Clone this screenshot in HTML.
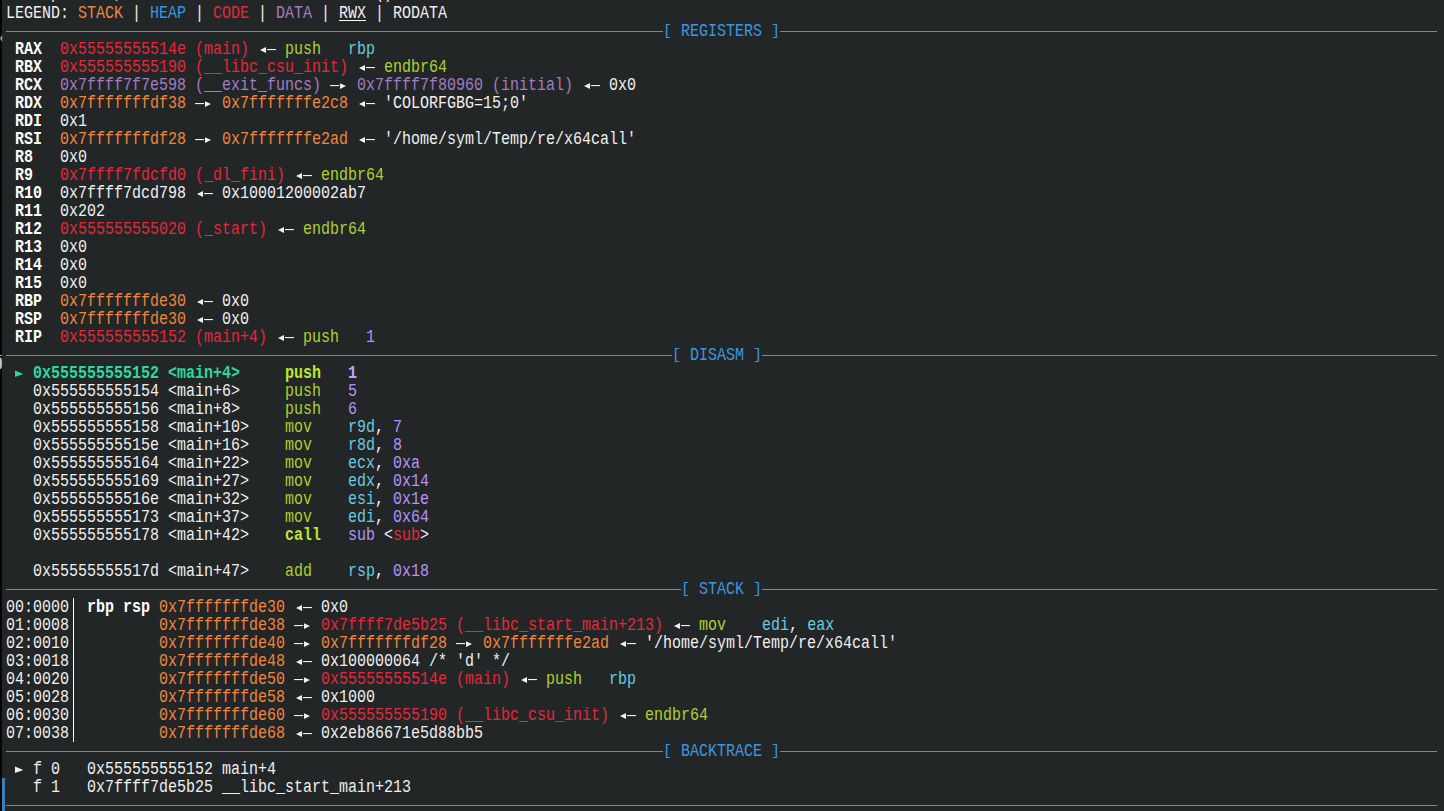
<!DOCTYPE html>
<html><head><meta charset="utf-8"><style>
html,body{margin:0;padding:0;background:#232627;}
body{width:1444px;height:811px;overflow:hidden;position:relative;font-family:"Liberation Mono",monospace;font-size:17.5px;}
.row{position:absolute;left:6px;height:18px;line-height:18px;white-space:pre;color:#f0f0f0;}
.row{transform-origin:0 0;transform:scaleX(0.85700);}
.ic{position:absolute;}
.vb{position:absolute;width:1.4px;height:18px;background:#fcfcfc;}
.ln{position:absolute;height:1px;background:#4a95d2;}
.bt{color:#3d97e0;}
.brk{display:inline-block;transform-origin:50% 5px;transform:scaleY(0.88);}
.w{color:#f0f0f0}
.u{color:#f0f0f0}
.b{color:#ffffff;font-weight:bold}
.o{color:#f0863a}
.bl{color:#3596e4}
.r{color:#e5283a}
.p{color:#a47cc4}
.g{color:#2ed7a0;font-weight:bold}
.mg{color:#aed12c}
.mgb{color:#bde52a;font-weight:bold}
.mb{color:#68cce0}
.mp{color:#b294fa}
.mpb{color:#bba4ff;font-weight:bold}
.edge{position:absolute;left:0;top:0;width:2px;height:811px;background:#050508;}
.edge2{position:absolute;left:2px;top:778px;width:3px;height:33px;background:#3a80b8;}
</style></head><body>
<div class="row" style="top:-16px"><span class="w">Breakpoint 1, 0x0000555555555152 in main ()</span></div>
<div class="row" style="top:4px"><span class="w">LEGEND: </span><span class="o">STACK</span><span class="w"> | </span><span class="bl">HEAP</span><span class="w"> | </span><span class="r">CODE</span><span class="w"> | </span><span class="p">DATA</span><span class="w"> | </span><span class="u">RWX</span><span class="w"> | </span><span class="w">RODATA</span></div>
<div class="row" style="top:40px"><span class="w"> </span><span class="b">RAX</span><span class="w">  </span><span class="r">0x55555555514e (main)</span><span class="w"> </span>  <span class="w"> </span><span class="mg">push</span><span class="w">   </span><span class="mb">rbp</span></div>
<div class="row" style="top:58px"><span class="w"> </span><span class="b">RBX</span><span class="w">  </span><span class="r">0x555555555190 (__libc_csu_init)</span><span class="w"> </span>  <span class="w"> </span><span class="mg">endbr64</span></div>
<div class="row" style="top:76px"><span class="w"> </span><span class="b">RCX</span><span class="w">  </span><span class="p">0x7ffff7f7e598 (__exit_funcs)</span><span class="w"> </span>  <span class="w"> </span><span class="p">0x7ffff7f80960 (initial)</span><span class="w"> </span>  <span class="w"> 0x0</span></div>
<div class="row" style="top:94px"><span class="w"> </span><span class="b">RDX</span><span class="w">  </span><span class="o">0x7fffffffdf38</span><span class="w"> </span>  <span class="w"> </span><span class="o">0x7fffffffe2c8</span><span class="w"> </span>  <span class="w"> &#x27;COLORFGBG=15;0&#x27;</span></div>
<div class="row" style="top:112px"><span class="w"> </span><span class="b">RDI</span><span class="w">  </span><span class="w">0x1</span></div>
<div class="row" style="top:130px"><span class="w"> </span><span class="b">RSI</span><span class="w">  </span><span class="o">0x7fffffffdf28</span><span class="w"> </span>  <span class="w"> </span><span class="o">0x7fffffffe2ad</span><span class="w"> </span>  <span class="w"> &#x27;/home/syml/Temp/re/x64call&#x27;</span></div>
<div class="row" style="top:148px"><span class="w"> </span><span class="b">R8</span><span class="w">   </span><span class="w">0x0</span></div>
<div class="row" style="top:166px"><span class="w"> </span><span class="b">R9</span><span class="w">   </span><span class="r">0x7ffff7fdcfd0 (_dl_fini)</span><span class="w"> </span>  <span class="w"> </span><span class="mg">endbr64</span></div>
<div class="row" style="top:184px"><span class="w"> </span><span class="b">R10</span><span class="w">  </span><span class="w">0x7ffff7dcd798 </span>  <span class="w"> 0x10001200002ab7</span></div>
<div class="row" style="top:202px"><span class="w"> </span><span class="b">R11</span><span class="w">  </span><span class="w">0x202</span></div>
<div class="row" style="top:220px"><span class="w"> </span><span class="b">R12</span><span class="w">  </span><span class="r">0x555555555020 (_start)</span><span class="w"> </span>  <span class="w"> </span><span class="mg">endbr64</span></div>
<div class="row" style="top:238px"><span class="w"> </span><span class="b">R13</span><span class="w">  </span><span class="w">0x0</span></div>
<div class="row" style="top:256px"><span class="w"> </span><span class="b">R14</span><span class="w">  </span><span class="w">0x0</span></div>
<div class="row" style="top:274px"><span class="w"> </span><span class="b">R15</span><span class="w">  </span><span class="w">0x0</span></div>
<div class="row" style="top:292px"><span class="w"> </span><span class="b">RBP</span><span class="w">  </span><span class="o">0x7fffffffde30</span><span class="w"> </span>  <span class="w"> 0x0</span></div>
<div class="row" style="top:310px"><span class="w"> </span><span class="b">RSP</span><span class="w">  </span><span class="o">0x7fffffffde30</span><span class="w"> </span>  <span class="w"> 0x0</span></div>
<div class="row" style="top:328px"><span class="w"> </span><span class="b">RIP</span><span class="w">  </span><span class="r">0x555555555152 (main+4)</span><span class="w"> </span>  <span class="w"> </span><span class="mg">push</span><span class="w">   </span><span class="mp">1</span></div>
<div class="row" style="top:364px"><span class="w"> </span> <span class="g"> 0x555555555152 &lt;main+4&gt;</span><span class="w">     </span><span class="mgb">push</span><span class="w">   </span><span class="mpb">1</span></div>
<div class="row" style="top:382px"><span class="w">   0x555555555154 &lt;main+6&gt;     </span><span class="mg">push</span><span class="w">   </span><span class="mp">5</span></div>
<div class="row" style="top:400px"><span class="w">   0x555555555156 &lt;main+8&gt;     </span><span class="mg">push</span><span class="w">   </span><span class="mp">6</span></div>
<div class="row" style="top:418px"><span class="w">   0x555555555158 &lt;main+10&gt;    </span><span class="mg">mov</span><span class="w">    </span><span class="mb">r9d</span><span class="w">, </span><span class="mp">7</span></div>
<div class="row" style="top:436px"><span class="w">   0x55555555515e &lt;main+16&gt;    </span><span class="mg">mov</span><span class="w">    </span><span class="mb">r8d</span><span class="w">, </span><span class="mp">8</span></div>
<div class="row" style="top:454px"><span class="w">   0x555555555164 &lt;main+22&gt;    </span><span class="mg">mov</span><span class="w">    </span><span class="mb">ecx</span><span class="w">, </span><span class="mp">0xa</span></div>
<div class="row" style="top:472px"><span class="w">   0x555555555169 &lt;main+27&gt;    </span><span class="mg">mov</span><span class="w">    </span><span class="mb">edx</span><span class="w">, </span><span class="mp">0x14</span></div>
<div class="row" style="top:490px"><span class="w">   0x55555555516e &lt;main+32&gt;    </span><span class="mg">mov</span><span class="w">    </span><span class="mb">esi</span><span class="w">, </span><span class="mp">0x1e</span></div>
<div class="row" style="top:508px"><span class="w">   0x555555555173 &lt;main+37&gt;    </span><span class="mg">mov</span><span class="w">    </span><span class="mb">edi</span><span class="w">, </span><span class="mp">0x64</span></div>
<div class="row" style="top:526px"><span class="w">   0x555555555178 &lt;main+42&gt;    </span><span class="mgb">call</span><span class="w">   </span><span class="mp">sub</span><span class="w"> &lt;</span><span class="r">sub</span><span class="w">&gt;</span></div>
<div class="row" style="top:562px"><span class="w">   0x55555555517d &lt;main+47&gt;    </span><span class="mg">add</span><span class="w">    </span><span class="mb">rsp</span><span class="w">, </span><span class="mp">0x18</span></div>
<div class="row" style="top:598px"><span class="w">00:0000</span> <span class="w"> </span><span class="b">rbp rsp</span><span class="w"> </span><span class="o">0x7fffffffde30</span><span class="w"> </span>  <span class="w"> 0x0</span></div>
<div class="row" style="top:616px"><span class="w">01:0008</span> <span class="w">         </span><span class="o">0x7fffffffde38</span><span class="w"> </span>  <span class="w"> </span><span class="r">0x7ffff7de5b25 (__libc_start_main+213)</span><span class="w"> </span>  <span class="w"> </span><span class="mg">mov</span><span class="w">    </span><span class="mb">edi</span><span class="w">, </span><span class="mb">eax</span></div>
<div class="row" style="top:634px"><span class="w">02:0010</span> <span class="w">         </span><span class="o">0x7fffffffde40</span><span class="w"> </span>  <span class="w"> </span><span class="o">0x7fffffffdf28</span><span class="w"> </span>  <span class="w"> </span><span class="o">0x7fffffffe2ad</span><span class="w"> </span>  <span class="w"> &#x27;/home/syml/Temp/re/x64call&#x27;</span></div>
<div class="row" style="top:652px"><span class="w">03:0018</span> <span class="w">         </span><span class="o">0x7fffffffde48</span><span class="w"> </span>  <span class="w"> 0x100000064 /* &#x27;d&#x27; */</span></div>
<div class="row" style="top:670px"><span class="w">04:0020</span> <span class="w">         </span><span class="o">0x7fffffffde50</span><span class="w"> </span>  <span class="w"> </span><span class="r">0x55555555514e (main)</span><span class="w"> </span>  <span class="w"> </span><span class="mg">push</span><span class="w">   </span><span class="mb">rbp</span></div>
<div class="row" style="top:688px"><span class="w">05:0028</span> <span class="w">         </span><span class="o">0x7fffffffde58</span><span class="w"> </span>  <span class="w"> 0x1000</span></div>
<div class="row" style="top:706px"><span class="w">06:0030</span> <span class="w">         </span><span class="o">0x7fffffffde60</span><span class="w"> </span>  <span class="w"> </span><span class="r">0x555555555190 (__libc_csu_init)</span><span class="w"> </span>  <span class="w"> </span><span class="mg">endbr64</span></div>
<div class="row" style="top:724px"><span class="w">07:0038</span> <span class="w">         </span><span class="o">0x7fffffffde68</span><span class="w"> </span>  <span class="w"> 0x2eb86671e5d88bb5</span></div>
<div class="row" style="top:760px"><span class="w"> </span> <span class="w"> f 0   0x555555555152 main+4</span></div>
<div class="row" style="top:778px"><span class="w">   f 1   0x7ffff7de5b25 __libc_start_main+213</span></div>
<div class="ln" style="top:31px;left:6px;width:657px"></div>
<div class="row bt" style="top:22px;left:663px"><span class="brk">[</span> REGISTERS <span class="brk">]</span></div>
<div class="ln" style="top:31px;left:780px;width:657px"></div>
<div class="ln" style="top:355px;left:6px;width:666px"></div>
<div class="row bt" style="top:346px;left:672px"><span class="brk">[</span> DISASM <span class="brk">]</span></div>
<div class="ln" style="top:355px;left:762px;width:675px"></div>
<div class="ln" style="top:589px;left:6px;width:675px"></div>
<div class="row bt" style="top:580px;left:681px"><span class="brk">[</span> STACK <span class="brk">]</span></div>
<div class="ln" style="top:589px;left:762px;width:675px"></div>
<div class="ln" style="top:751px;left:6px;width:657px"></div>
<div class="row bt" style="top:742px;left:663px"><span class="brk">[</span> BACKTRACE <span class="brk">]</span></div>
<div class="ln" style="top:751px;left:780px;width:657px"></div>
<div class="ln" style="top:805px;left:6px;width:1431px"></div>
<svg class="ic w" style="left:258px;top:39px" width="18" height="18" viewBox="0 0 18 18"><path d="M2 11.1L8 8.1V14Z" fill="currentColor"/><rect x="9" y="10" width="9.1" height="1.1" fill="currentColor"/></svg>
<svg class="ic w" style="left:357px;top:57px" width="18" height="18" viewBox="0 0 18 18"><path d="M2 11.1L8 8.1V14Z" fill="currentColor"/><rect x="9" y="10" width="9.1" height="1.1" fill="currentColor"/></svg>
<svg class="ic w" style="left:330px;top:75px" width="18" height="18" viewBox="0 0 18 18"><rect x="0" y="10" width="9.1" height="1.1" fill="currentColor"/><path d="M10 8.2L16 11.1L10 14Z" fill="currentColor"/></svg>
<svg class="ic w" style="left:582px;top:75px" width="18" height="18" viewBox="0 0 18 18"><path d="M2 11.1L8 8.1V14Z" fill="currentColor"/><rect x="9" y="10" width="9.1" height="1.1" fill="currentColor"/></svg>
<svg class="ic w" style="left:195px;top:93px" width="18" height="18" viewBox="0 0 18 18"><rect x="0" y="10" width="9.1" height="1.1" fill="currentColor"/><path d="M10 8.2L16 11.1L10 14Z" fill="currentColor"/></svg>
<svg class="ic w" style="left:357px;top:93px" width="18" height="18" viewBox="0 0 18 18"><path d="M2 11.1L8 8.1V14Z" fill="currentColor"/><rect x="9" y="10" width="9.1" height="1.1" fill="currentColor"/></svg>
<svg class="ic w" style="left:195px;top:129px" width="18" height="18" viewBox="0 0 18 18"><rect x="0" y="10" width="9.1" height="1.1" fill="currentColor"/><path d="M10 8.2L16 11.1L10 14Z" fill="currentColor"/></svg>
<svg class="ic w" style="left:357px;top:129px" width="18" height="18" viewBox="0 0 18 18"><path d="M2 11.1L8 8.1V14Z" fill="currentColor"/><rect x="9" y="10" width="9.1" height="1.1" fill="currentColor"/></svg>
<svg class="ic w" style="left:294px;top:165px" width="18" height="18" viewBox="0 0 18 18"><path d="M2 11.1L8 8.1V14Z" fill="currentColor"/><rect x="9" y="10" width="9.1" height="1.1" fill="currentColor"/></svg>
<svg class="ic w" style="left:195px;top:183px" width="18" height="18" viewBox="0 0 18 18"><path d="M2 11.1L8 8.1V14Z" fill="currentColor"/><rect x="9" y="10" width="9.1" height="1.1" fill="currentColor"/></svg>
<svg class="ic w" style="left:276px;top:219px" width="18" height="18" viewBox="0 0 18 18"><path d="M2 11.1L8 8.1V14Z" fill="currentColor"/><rect x="9" y="10" width="9.1" height="1.1" fill="currentColor"/></svg>
<svg class="ic w" style="left:195px;top:291px" width="18" height="18" viewBox="0 0 18 18"><path d="M2 11.1L8 8.1V14Z" fill="currentColor"/><rect x="9" y="10" width="9.1" height="1.1" fill="currentColor"/></svg>
<svg class="ic w" style="left:195px;top:309px" width="18" height="18" viewBox="0 0 18 18"><path d="M2 11.1L8 8.1V14Z" fill="currentColor"/><rect x="9" y="10" width="9.1" height="1.1" fill="currentColor"/></svg>
<svg class="ic w" style="left:276px;top:327px" width="18" height="18" viewBox="0 0 18 18"><path d="M2 11.1L8 8.1V14Z" fill="currentColor"/><rect x="9" y="10" width="9.1" height="1.1" fill="currentColor"/></svg>
<svg class="ic g" style="left:15px;top:363px" width="9" height="18" viewBox="0 0 9 18"><path d="M0 7.6L8.3 10.9L0 14Z" fill="currentColor"/></svg>
<div class="vb" style="left:73px;top:597.6px"></div>
<svg class="ic w" style="left:294px;top:597px" width="18" height="18" viewBox="0 0 18 18"><path d="M2 11.1L8 8.1V14Z" fill="currentColor"/><rect x="9" y="10" width="9.1" height="1.1" fill="currentColor"/></svg>
<div class="vb" style="left:73px;top:615.6px"></div>
<svg class="ic w" style="left:294px;top:615px" width="18" height="18" viewBox="0 0 18 18"><rect x="0" y="10" width="9.1" height="1.1" fill="currentColor"/><path d="M10 8.2L16 11.1L10 14Z" fill="currentColor"/></svg>
<svg class="ic w" style="left:672px;top:615px" width="18" height="18" viewBox="0 0 18 18"><path d="M2 11.1L8 8.1V14Z" fill="currentColor"/><rect x="9" y="10" width="9.1" height="1.1" fill="currentColor"/></svg>
<div class="vb" style="left:73px;top:633.6px"></div>
<svg class="ic w" style="left:294px;top:633px" width="18" height="18" viewBox="0 0 18 18"><rect x="0" y="10" width="9.1" height="1.1" fill="currentColor"/><path d="M10 8.2L16 11.1L10 14Z" fill="currentColor"/></svg>
<svg class="ic w" style="left:456px;top:633px" width="18" height="18" viewBox="0 0 18 18"><rect x="0" y="10" width="9.1" height="1.1" fill="currentColor"/><path d="M10 8.2L16 11.1L10 14Z" fill="currentColor"/></svg>
<svg class="ic w" style="left:618px;top:633px" width="18" height="18" viewBox="0 0 18 18"><path d="M2 11.1L8 8.1V14Z" fill="currentColor"/><rect x="9" y="10" width="9.1" height="1.1" fill="currentColor"/></svg>
<div class="vb" style="left:73px;top:651.6px"></div>
<svg class="ic w" style="left:294px;top:651px" width="18" height="18" viewBox="0 0 18 18"><path d="M2 11.1L8 8.1V14Z" fill="currentColor"/><rect x="9" y="10" width="9.1" height="1.1" fill="currentColor"/></svg>
<div class="vb" style="left:73px;top:669.6px"></div>
<svg class="ic w" style="left:294px;top:669px" width="18" height="18" viewBox="0 0 18 18"><rect x="0" y="10" width="9.1" height="1.1" fill="currentColor"/><path d="M10 8.2L16 11.1L10 14Z" fill="currentColor"/></svg>
<svg class="ic w" style="left:519px;top:669px" width="18" height="18" viewBox="0 0 18 18"><path d="M2 11.1L8 8.1V14Z" fill="currentColor"/><rect x="9" y="10" width="9.1" height="1.1" fill="currentColor"/></svg>
<div class="vb" style="left:73px;top:687.6px"></div>
<svg class="ic w" style="left:294px;top:687px" width="18" height="18" viewBox="0 0 18 18"><path d="M2 11.1L8 8.1V14Z" fill="currentColor"/><rect x="9" y="10" width="9.1" height="1.1" fill="currentColor"/></svg>
<div class="vb" style="left:73px;top:705.6px"></div>
<svg class="ic w" style="left:294px;top:705px" width="18" height="18" viewBox="0 0 18 18"><rect x="0" y="10" width="9.1" height="1.1" fill="currentColor"/><path d="M10 8.2L16 11.1L10 14Z" fill="currentColor"/></svg>
<svg class="ic w" style="left:618px;top:705px" width="18" height="18" viewBox="0 0 18 18"><path d="M2 11.1L8 8.1V14Z" fill="currentColor"/><rect x="9" y="10" width="9.1" height="1.1" fill="currentColor"/></svg>
<div class="vb" style="left:73px;top:723.6px"></div>
<svg class="ic w" style="left:294px;top:723px" width="18" height="18" viewBox="0 0 18 18"><path d="M2 11.1L8 8.1V14Z" fill="currentColor"/><rect x="9" y="10" width="9.1" height="1.1" fill="currentColor"/></svg>
<svg class="ic w" style="left:15px;top:759px" width="9" height="18" viewBox="0 0 9 18"><path d="M0 7.6L8.3 10.9L0 14Z" fill="currentColor"/></svg>
<div class="edge"></div><svg style="position:absolute;left:0;top:34px" width="3" height="10"><path d="M2.2 0.5L0 4.5L2.2 8Z" fill="#9a9a9a"/></svg><div style="position:absolute;left:0;top:355px;width:2px;height:1px;background:#9ab8d0"></div><svg style="position:absolute;left:0;top:357px" width="3" height="13"><path d="M0 0.5H0.8Q1.9 1.5 1.9 4V9Q1.9 11.5 0.5 12H0Z" fill="#c4c4c4"/></svg><div style="position:absolute;left:339px;top:20px;width:27px;height:1px;background:#fcfcfc"></div><div class="edge2"></div>
</body></html>
